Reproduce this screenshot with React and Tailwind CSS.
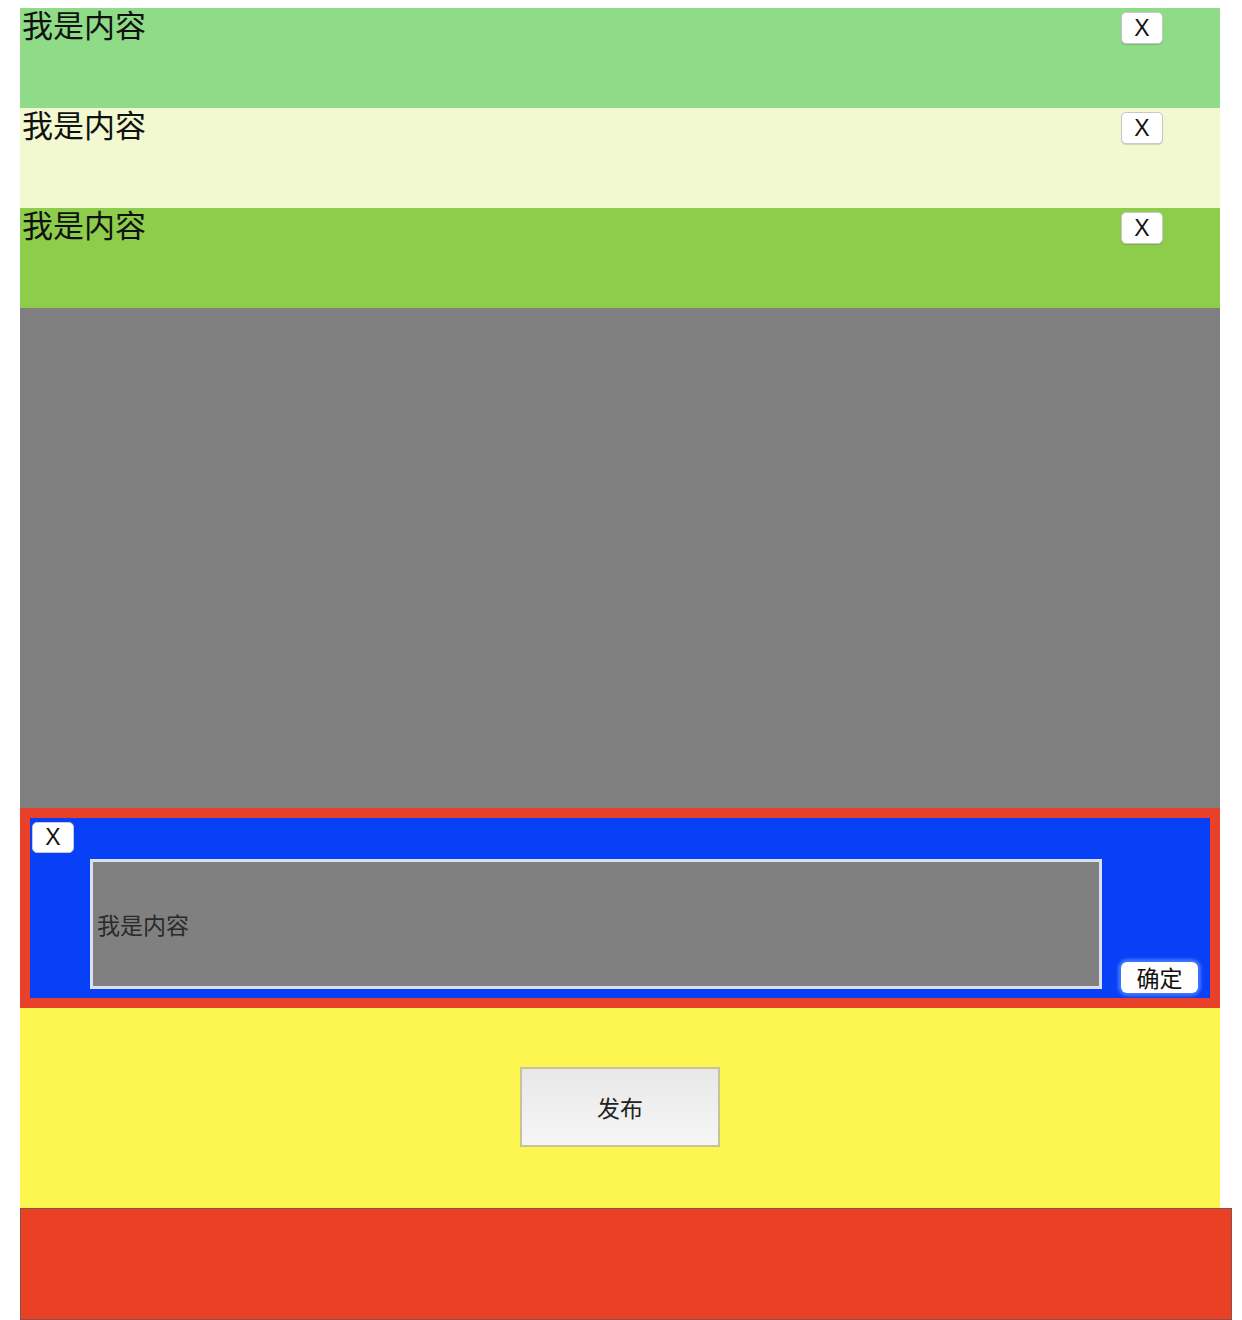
export default function App() {
  const rows = ["bg-[#8fdb88]", "bg-[#f2f8d0]", "bg-[#8dcd4b]"];
  const font = { fontFamily: '"Noto Sans CJK SC", "Liberation Sans", sans-serif' };
  const xfont = { fontFamily: '"Liberation Sans", sans-serif' };
  return (
    <div className="bg-white min-h-[1320px] pt-[8px] pl-[20px]" style={font}>
      <div className="w-[1200px]">
        {rows.map((c, i) => (
          <div key={i} className={`${c} h-[100px] flex justify-between`}>
            <span className="pl-[2px] text-[31px] leading-[36px] text-[#111] -mt-[2px]">我是内容</span>
            <button style={xfont} className="mt-[4px] mr-[57px] w-[42px] h-[32px] bg-white rounded-[5px] border border-[#c8c8c8] text-[23px] leading-none text-[#111] shadow-[0_1px_1px_rgba(0,0,0,0.15)]">X</button>
          </div>
        ))}
        <div className="bg-[#808080] h-[500px]" />
        <div className="h-[200px] border-[10px] border-[#e9402a] bg-[#0840f8] flex">
          <div className="w-[60px] pt-[4px] pl-[2px]">
            <button style={xfont} className="w-[42px] h-[31px] bg-white rounded-[5px] border border-[#c8c8c8] text-[23px] leading-none text-[#111]">X</button>
          </div>
          <div className="pt-[41px]">
            <div className="w-[1012px] h-[130px] bg-[#808080] border-[3px] border-[#dde0f0] flex items-center pl-[4px] text-[23px] text-[#2a2a2a]">我是内容</div>
          </div>
          <div className="flex-1 flex items-end pb-[5px] pl-[19px]">
            <button className="w-[77px] h-[31px] bg-white rounded-[6px] text-[23px] leading-none text-[#111] shadow-[0_0_3px_3px_rgba(90,140,255,0.7)]">确定</button>
          </div>
        </div>
        <div className="bg-[#fdf651] h-[200px] flex items-center justify-center">
          <button className="w-[200px] h-[80px] border-2 border-[#c8c39a] bg-gradient-to-b from-[#e8e8e8] to-[#f6f6f6] text-[23px] text-[#222] -mt-[2px]">发布</button>
        </div>
      </div>
      <div className="w-[1212px] h-[112px] bg-[#ea4024] border border-[#8a5050]" />
    </div>
  );
}
